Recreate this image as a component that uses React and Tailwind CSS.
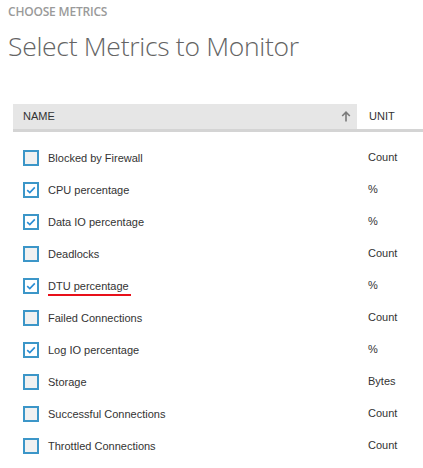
import React from "react";

const metrics = [
  { name: "Blocked by Firewall", unit: "Count", checked: false },
  { name: "CPU percentage", unit: "%", checked: true },
  { name: "Data IO percentage", unit: "%", checked: true },
  { name: "Deadlocks", unit: "Count", checked: false },
  { name: "DTU percentage", unit: "%", checked: true, flagged: true },
  { name: "Failed Connections", unit: "Count", checked: false },
  { name: "Log IO percentage", unit: "%", checked: true },
  { name: "Storage", unit: "Bytes", checked: false },
  { name: "Successful Connections", unit: "Count", checked: false },
  { name: "Throttled Connections", unit: "Count", checked: false },
];

function Checkbox({ checked }) {
  return (
    <div
      className={
        "w-4 h-4 border-2 border-[#3c96c8] flex items-center justify-center " +
        (checked ? "bg-white" : "bg-[#f1f1f1]")
      }
    >
      {checked && (
        <svg width="10" height="8" viewBox="0 0 10 8">
          <path d="M1.2 4.2 L3.8 6.6 L8.8 1.4" fill="none" stroke="#2a8dd4" strokeWidth="1.6" />
        </svg>
      )}
    </div>
  );
}

export default function App() {
  return (
    <div className="w-[423px] h-[468px] bg-white font-['Liberation_Sans',Arial,sans-serif] overflow-hidden">
      <div className="pl-[8px] pt-[4px]">
        <div className="font-['Open_Sans',sans-serif] text-[12px] font-semibold text-[#9a9a9a] leading-[15px] tracking-[-0.2px]">
          CHOOSE METRICS
        </div>
        <h1 className="font-['Open_Sans',sans-serif] font-light text-[26.5px] text-[#646464] leading-[34px] mt-[10px] tracking-[-0.3px]">
          Select Metrics to Monitor
        </h1>
      </div>

      <div className="ml-[13px] mt-[41px]">
        {/* header */}
        <div className="flex h-[28px] border-b-[3px] border-[#d4d4d4] text-[11px] text-[#333]">
          <div className="w-[344px] bg-[#e6e6e6] flex items-center justify-between pl-[10px] pr-[6px]">
            <span>NAME</span>
            <svg width="10" height="11" viewBox="0 0 10 11">
              <path d="M5 10.5 V1.5 M1.2 5 L5 1.2 L8.8 5" fill="none" stroke="#7a7a7a" strokeWidth="1.6" />
            </svg>
          </div>
          <div className="flex-1 flex items-center pl-[12px]">UNIT</div>
        </div>

        {/* rows */}
        <div className="mt-[10px]">
          {metrics.map((m) => (
            <div key={m.name} className="flex items-center h-[32px] text-[11px] text-[#333]">
              <div className="pl-[10px] pr-[9px]">
                <Checkbox checked={m.checked} />
              </div>
              <div className="w-[320px] relative">
                <span>{m.name}</span>
                {m.flagged && (
                  <div className="absolute left-[0px] top-[16px] w-[83px] h-[2px] bg-[#e8101a]" />
                )}
              </div>
              <div className="-mt-[2px]">{m.unit}</div>
            </div>
          ))}
        </div>
      </div>
    </div>
  );
}
